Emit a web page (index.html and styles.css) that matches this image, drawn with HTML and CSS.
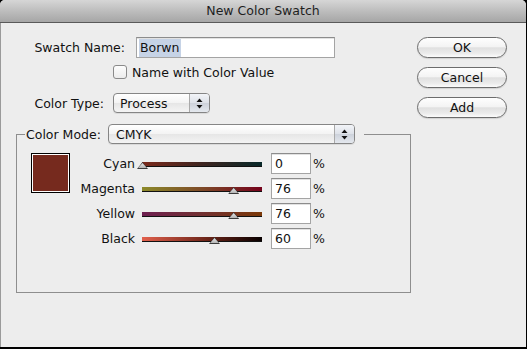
FILE: index.html
```html
<!DOCTYPE html>
<html lang="en">
<head>
    <meta charset="UTF-8">
    <title>New Color Swatch</title>
    <link rel="stylesheet" href="styles.css">
</head>
<body>

<div class="window">
    <div class="titlebar">New Color Swatch</div>

    <div class="content">
        <div class="main">
            <div class="row name-row">
                <label class="label name-label">Swatch Name:</label>
                <div class="textfield name-field"><span class="selected">Borwn</span></div>
            </div>

            <div class="row check-row">
                <span class="checkbox"></span>
                <span>Name with Color Value</span>
            </div>

            <div class="row type-row">
                <label class="label type-label">Color Type:</label>
                <div class="popup type-popup">
                    <span class="popup-text">Process</span>
                    <span class="arrows">
                        <svg width="7" height="11" viewBox="0 0 7 11"><path d="M3.5 0.5 L6.5 4 L0.5 4 Z" fill="#111"/><path d="M3.5 10.5 L6.5 7 L0.5 7 Z" fill="#111"/></svg>
                    </span>
                </div>
            </div>

            <!-- Modo de color -->
            <fieldset class="group">
                <legend class="group-legend">
                    <span class="legend-label">Color Mode:</span>
                    <div class="popup mode-popup">
                        <span class="popup-text">CMYK</span>
                        <span class="arrows">
                            <svg width="7" height="11" viewBox="0 0 7 11"><path d="M3.5 0.5 L6.5 4 L0.5 4 Z" fill="#111"/><path d="M3.5 10.5 L6.5 7 L0.5 7 Z" fill="#111"/></svg>
                        </span>
                    </div>
                </legend>

                <div class="group-body">
                    <div class="swatch"></div>

                    <div class="sliders">
                        <span class="slider-label">Cyan</span>
                        <div class="slider cyan"><span class="thumb" style="left: 0%"></span></div>
                        <div class="textfield value">0</div>
                        <span class="percent">%</span>

                        <span class="slider-label">Magenta</span>
                        <div class="slider magenta"><span class="thumb" style="left: 76%"></span></div>
                        <div class="textfield value">76</div>
                        <span class="percent">%</span>

                        <span class="slider-label">Yellow</span>
                        <div class="slider yellow"><span class="thumb" style="left: 76%"></span></div>
                        <div class="textfield value">76</div>
                        <span class="percent">%</span>

                        <span class="slider-label">Black</span>
                        <div class="slider black"><span class="thumb" style="left: 60%"></span></div>
                        <div class="textfield value">60</div>
                        <span class="percent">%</span>
                    </div>
                </div>
            </fieldset>
        </div>

        <div class="buttons">
            <button class="button">OK</button>
            <button class="button">Cancel</button>
            <button class="button">Add</button>
        </div>
    </div>
</div>

</body>
</html>
```

FILE: styles.css
```css
body {
    margin: 0;
    padding: 0;
    background-color: #000;
    font-family: "DejaVu Sans", Verdana, sans-serif;
    font-size: 12.5px;
    color: #111;
}

.window {
    width: 526px;
    height: 347px;
    background-color: #ededed;
    border-radius: 5px 5px 0 0;
    box-shadow: inset 1px 0 0 #9a9a9a;
    overflow: hidden;
}

/* Barra de titulo */
.titlebar {
    height: 22px;
    line-height: 22px;
    text-align: center;
    color: #1e1e1e;
    background: linear-gradient(#d6d6d6, #bdbdbd 50%, #a6a6a6);
    border-bottom: 1px solid #5a5a5a;
}

.content {
    display: flex;
}

.main {
    width: 417px;
    flex: none;
    padding-top: 14px;
}

.row {
    display: flex;
    align-items: center;
}

.label {
    text-align: right;
    flex: none;
}

.name-row {
    height: 21px;
    margin-bottom: 7px;
}

.name-label {
    width: 125px;
    margin-right: 11px;
}

.textfield {
    box-sizing: border-box;
    background: #fff;
    border: 1px solid #a4a4a4;
    border-top-color: #8c8c8c;
    box-shadow: inset 0 1px 0 #e2e2e2;
    display: flex;
    align-items: center;
}

.name-field {
    width: 199px;
    height: 21px;
    padding-left: 2px;
}

.selected {
    background-color: #c6d3e6;
    padding: 1px 1px 2px 1px;
}

.check-row {
    height: 14px;
    padding-left: 113px;
    margin-bottom: 14px;
}

.checkbox {
    box-sizing: border-box;
    width: 14px;
    height: 14px;
    margin-right: 5px;
    border: 1px solid #8a8a8a;
    border-radius: 3px;
    background: linear-gradient(#fdfdfd, #ececec);
}

.type-row {
    height: 20px;
}

.type-label {
    width: 104px;
    margin-right: 9px;
}

/* Menus desplegables */
.popup {
    box-sizing: border-box;
    height: 20px;
    display: flex;
    align-items: stretch;
    border: 1px solid #858585;
    border-radius: 4px;
    background: linear-gradient(#ffffff, #f3f3f3 50%, #e6e6e6 52%, #f4f4f4);
    box-shadow: 0 1px 0 rgba(0, 0, 0, 0.08);
    overflow: hidden;
}

.popup-text {
    flex: 1;
    display: flex;
    align-items: center;
    padding-left: 6px;
}

.arrows {
    width: 19px;
    display: flex;
    align-items: center;
    justify-content: center;
    border-left: 1px solid #a9a9a9;
    background: linear-gradient(#f2f4f8, #dde1e8 50%, #cdd2db 52%, #e4e8ee);
}

.type-popup {
    width: 97px;
}

.group {
    box-sizing: border-box;
    width: 395px;
    height: 169px;
    margin: 11px 0 0 16px;
    padding: 0;
    border: 1px solid #8e8e8e;
}

.group-legend {
    display: flex;
    align-items: center;
    margin-left: 8px;
    padding: 0 9px 0 1px;
}

.legend-label {
    width: 76px;
    flex: none;
    white-space: nowrap;
}

.mode-popup {
    width: 247px;
    margin-left: 6px;
}

.mode-popup .popup-text {
    padding-left: 7px;
}

.group-body {
    display: flex;
    align-items: flex-start;
    padding: 9px 0 0 14px;
}

.swatch {
    box-sizing: border-box;
    width: 39px;
    height: 40px;
    background-color: #762a1e;
    border: 1px solid #000;
    box-shadow: inset 0 0 0 1px #fff;
    margin-right: 6px;
}

/* Deslizadores CMYK */
.sliders {
    display: grid;
    grid-template-columns: 59px 120px 40px auto;
    grid-auto-rows: 21px;
    row-gap: 4px;
    align-items: center;
}

.slider-label {
    text-align: right;
    margin-right: -7px;
    padding-right: 7px;
}

.slider {
    position: relative;
    height: 4px;
    margin: 2px 0 0 7px;
    border-bottom: 1px solid #111;
    width: 120px;
}

.slider.cyan {
    background: linear-gradient(to right, #7b2a1c, #3e2520 50%, #082829);
}

.slider.magenta {
    background: linear-gradient(to right, #8c8a2a, #7e4a28 50%, #75021c);
}

.slider.yellow {
    background: linear-gradient(to right, #6d1f50, #723031 50%, #7b3808);
}

.slider.black {
    background: linear-gradient(to right, #e2604c, #6a2418 55%, #080000);
}

.thumb {
    position: absolute;
    top: 0;
    width: 11px;
    height: 7px;
    margin-left: -5px;
    background: #3c3c3c;
    clip-path: polygon(50% 0, 100% 100%, 0 100%);
}

.thumb::after {
    content: "";
    position: absolute;
    left: 1px;
    right: 1px;
    top: 1px;
    bottom: 1px;
    background: linear-gradient(#e8e8e8, #b4b4b4);
    clip-path: polygon(50% 0, 100% 100%, 0 100%);
}

.value {
    height: 21px;
    margin-left: 16px;
    width: 40px;
    padding-left: 3px;
}

.percent {
    margin-left: 18px;
}

/* Botones */
.buttons {
    display: flex;
    flex-direction: column;
    gap: 9px;
    padding-top: 14px;
}

.button {
    box-sizing: border-box;
    width: 90px;
    height: 21px;
    padding: 0;
    font-family: "DejaVu Sans", Verdana, sans-serif;
    font-size: 12.5px;
    color: #111;
    border: 1px solid #6c6c6c;
    border-radius: 11px;
    background: linear-gradient(#fefefe, #f4f4f4 45%, #e0e0e0 52%, #ebebeb 80%, #fbfbfb);
    box-shadow: 0 1px 1px rgba(0, 0, 0, 0.12);
}
```
